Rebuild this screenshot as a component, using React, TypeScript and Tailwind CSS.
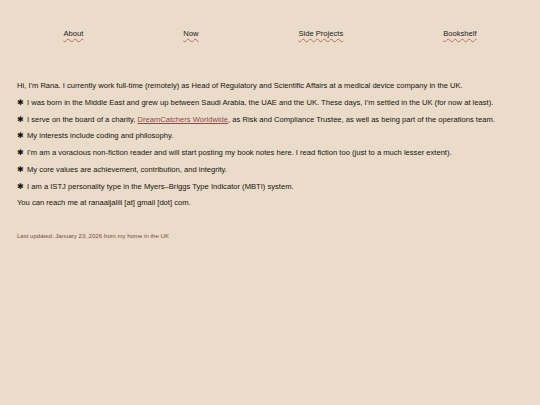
export default function App() {
  const nav = ["About", "Now", "Side Projects", "Bookshelf"];
  const bullets: React.ReactNode[] = [
    "I was born in the Middle East and grew up between Saudi Arabia, the UAE and the UK. These days, I’m settled in the UK (for now at least).",
    <>
      I serve on the board of a charity,{" "}
      <a href="#" className="text-[#8c4a48] underline">
        DreamCatchers Worldwide
      </a>
      , as Risk and Compliance Trustee, as well as being part of the operations team.
    </>,
    "My interests include coding and philosophy.",
    "I’m am a voracious non-fiction reader and will start posting my book notes here. I read fiction too (just to a much lesser extent).",
    "My core values are achievement, contribution, and integrity.",
    "I am a ISTJ personality type in the Myers–Briggs Type Indicator (MBTI) system.",
  ];

  return (
    <div className="min-h-[405px] w-[540px] bg-[#eadcc8] text-[#161311] font-['Liberation_Sans',Arial,sans-serif]">
      {/* Nav */}
      <nav className="flex justify-center gap-[100px] pt-[28px] text-[7.6px]">
        {nav.map((item) => (
          <a
            key={item}
            href="#"
            className="underline decoration-wavy decoration-[#c06a6a] decoration-[0.6px] underline-offset-[2px] text-[#222]"
          >
            {item}
          </a>
        ))}
      </nav>

      {/* Content */}
      <main className="px-[17px] pt-[42px] text-[7.6px] leading-[10px]">
        <p className="mb-[6.7px]">
          Hi, I'm Rana. I currently work full-time (remotely) as Head of Regulatory and Scientific Affairs at a medical device company in the UK.
        </p>
        {bullets.map((b, i) => (
          <p key={i} className="mb-[6.7px]">
            <span className="mr-[3px]">✱</span>
            {b}
          </p>
        ))}
        <p className="mb-[6.7px]">You can reach me at ranaaljalili [at] gmail [dot] com.</p>

        <p className="mt-[23px] text-[6.05px] text-[#7b4946]">
          Last updated: January 23, 2026 from my home in the UK
        </p>
      </main>
    </div>
  );
}
